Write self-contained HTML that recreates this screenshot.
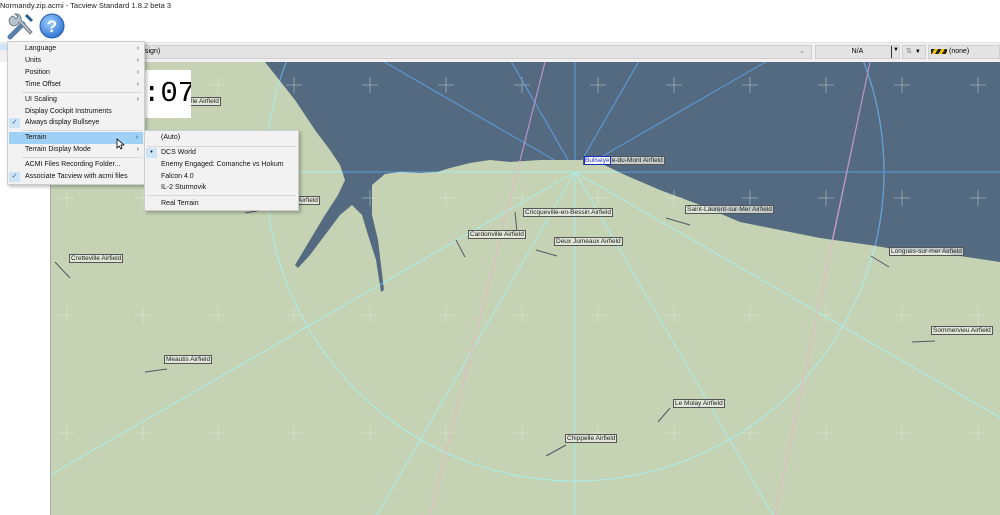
<!DOCTYPE html>
<html style="overflow:hidden"><head><meta charset="utf-8"><style>
*{margin:0;padding:0;box-sizing:border-box}
html,body{width:1000px;height:515px;overflow:hidden}
body{background:#fff;font-family:"Liberation Sans",sans-serif;position:relative}
.abs{position:absolute}
.lbl{position:absolute;font-size:6.5px;line-height:7px;padding:0 1px;border:1px solid #555;background:rgba(235,238,230,.75);color:#222;white-space:nowrap}
.menu{position:absolute;background:#f2f2f2;border:1px solid #ccc;box-shadow:2px 2px 3px rgba(0,0,0,.25);font-size:7px;color:#111}
.it{position:absolute;left:0;right:0;height:12px;line-height:12px}
.sep{position:absolute;left:14px;right:2px;height:1px;background:#d8d8d8}
.arr{position:absolute;right:5px;font-size:7px;color:#444}
</style></head><body>
<div class="abs" style="left:0;top:1px;font-size:7.5px;color:#222">Normandy.zip.acmi - Tacview Standard 1.8.2 beta 3</div>
<svg class="abs" style="left:6px;top:11px" width="30" height="30" viewBox="0 0 30 30">
<path d="M4 26 L17 13" stroke="#5a7fa8" stroke-width="5" stroke-linecap="round"/>
<path d="M7 5 a5 5 0 1 0 6 6 L24 23 L26 21 L15 9 a5 5 0 0 0 -6 -6 l3 3 -2 2z" fill="#b8c4cc" stroke="#6d7a85" stroke-width="1"/>
<path d="M20 4 L26 10" stroke="#2c5f96" stroke-width="3"/>
</svg>
<svg class="abs" style="left:39px;top:13px" width="26" height="26" viewBox="0 0 26 26">
<defs><radialGradient id="g" cx=".4" cy=".35" r=".7"><stop offset="0" stop-color="#9fd0ff"/><stop offset="1" stop-color="#2a6fd0"/></radialGradient></defs>
<circle cx="13" cy="13" r="12" fill="url(#g)" stroke="#2a5ea8"/>
<text x="13" y="19" text-anchor="middle" font-family="Liberation Sans" font-weight="bold" font-size="17" fill="#fff">?</text>
</svg>
<div class="abs" style="left:0;top:42px;width:1000px;height:20px;background:#f0f0f0;border-top:1px solid #e4e4e4"></div>
<div class="abs" style="left:0;top:44px;width:8px;height:6px;background:#cfe3f7"></div>
<div class="abs" style="left:140px;top:45px;width:672px;height:14px;background:#e3e3e3;border:1px solid #cfcfcf;font-size:7px;line-height:12px;padding-left:4px">sign)<span style="position:absolute;right:6px;color:#777">&#8964;</span></div>
<div class="abs" style="left:815px;top:45px;width:85px;height:14px;background:#e3e3e3;border:1px solid #cfcfcf;font-size:7px;line-height:12px;text-align:center">N/A</div>
<div class="abs" style="left:891px;top:46px;width:1px;height:12px;background:#333"></div>
<div class="abs" style="left:893px;top:47px;font-size:6px">&#9660;</div>
<div class="abs" style="left:902px;top:45px;width:24px;height:14px;background:#e3e3e3;border:1px solid #cfcfcf;font-size:7px;line-height:12px;padding-left:3px;color:#777">&#8645;<span style="color:#000;font-size:6px;margin-left:3px">&#9660;</span></div>
<div class="abs" style="left:928px;top:45px;width:72px;height:14px;background:#e3e3e3;border:1px solid #cfcfcf;font-size:7px;line-height:12px;padding-left:20px">(none)</div>
<div class="abs" style="left:931px;top:49px;width:16px;height:5px;background:repeating-linear-gradient(120deg,#222 0 3px,#f2c200 3px 6px)"></div>
<svg class="abs" style="left:0;top:0" width="1000" height="515" viewBox="0 0 1000 515">
<defs>
<clipPath id="map"><rect x="51" y="62" width="949" height="453"/></clipPath>
<clipPath id="sea"><path d="M265,62 L1000,62 L1000,262 L960,256 L940,252 L900,250 L870,245 L820,238 L780,230 L740,222 L700,205 L660,190 L625,175 L600,163 L590,160 L540,160 L510,162 L490,160 L470,163 L450,168 L437,172 L420,173 L400,172 L385,174 L372,185 L372,215 L378,240 L384,290 L381,292 L376,260 L368,235 L362,215 L352,205 L340,215 L325,235 L310,255 L298,268 L295,265 L310,240 L325,215 L338,195 L345,180 L340,165 L330,150 L315,130 L295,100 Z"/></clipPath>
</defs>
<line x1="50.5" y1="62" x2="50.5" y2="515" stroke="#aaa"/>
<g clip-path="url(#map)">
<rect x="51" y="62" width="949" height="453" fill="#c5d3b4"/>
<path d="M265,62 L1000,62 L1000,262 L960,256 L940,252 L900,250 L870,245 L820,238 L780,230 L740,222 L700,205 L660,190 L625,175 L600,163 L590,160 L540,160 L510,162 L490,160 L470,163 L450,168 L437,172 L420,173 L400,172 L385,174 L372,185 L372,215 L378,240 L384,290 L381,292 L376,260 L368,235 L362,215 L352,205 L340,215 L325,235 L310,255 L298,268 L295,265 L310,240 L325,215 L338,195 L345,180 L340,165 L330,150 L315,130 L295,100 Z" fill="#546a80"/>
<g stroke-width="1" fill="none" opacity=".4" stroke="#eef3e4">
<path d="M67,77v16M59,85h16M143,77v16M135,85h16M218,77v16M210,85h16M294,77v16M286,85h16M370,77v16M362,85h16M446,77v16M438,85h16M522,77v16M514,85h16M598,77v16M590,85h16M674,77v16M666,85h16M750,77v16M742,85h16M826,77v16M818,85h16M902,77v16M894,85h16M978,77v16M970,85h16"/>
<path d="M67,190v16M59,198h16M143,190v16M135,198h16M218,190v16M210,198h16M294,190v16M286,198h16M370,190v16M362,198h16M446,190v16M438,198h16M522,190v16M514,198h16M598,190v16M590,198h16M674,190v16M666,198h16M750,190v16M742,198h16M826,190v16M818,198h16M902,190v16M894,198h16M978,190v16M970,198h16"/>
<path d="M67,307v16M59,315h16M143,307v16M135,315h16M218,307v16M210,315h16M294,307v16M286,315h16M370,307v16M362,315h16M446,307v16M438,315h16M522,307v16M514,315h16M598,307v16M590,315h16M674,307v16M666,315h16M750,307v16M742,315h16M826,307v16M818,315h16M902,307v16M894,315h16M978,307v16M970,315h16"/>
<path d="M67,425v16M59,433h16M143,425v16M135,433h16M218,425v16M210,433h16M294,425v16M286,433h16M370,425v16M362,433h16M446,425v16M438,433h16M522,425v16M514,433h16M598,425v16M590,433h16M674,425v16M666,433h16M750,425v16M742,433h16M826,425v16M818,433h16M902,425v16M894,433h16M978,425v16M970,433h16"/>
</g>
<g stroke="#a9eeee" stroke-width="1" fill="none">
<path d="M575,172 L1575,172 M575,172 L1441,672 M575,172 L1075,1038 M575,172 L575,1172 M575,172 L75,1038 M575,172 L-291,672 M575,172 L-425,172"/>
<circle cx="575" cy="172" r="309"/>
</g>
<g stroke="#5b9ee0" stroke-width="1" fill="none" clip-path="url(#sea)">
<path d="M575,172 L1575,172 M575,172 L-425,172 M575,172 L-291,-328 M575,172 L75,-694 M575,172 L575,-828 M575,172 L1075,-694 M575,172 L1441,-328 M575,172 L1441,672 M575,172 L-291,672"/>
<circle cx="575" cy="172" r="309"/>
</g>
<path d="M545,62 L430,515" stroke="#e4b8c8" stroke-width="1" fill="none"/>
<path d="M545,62 L490,280" stroke="#b48cc8" stroke-width="1" fill="none" clip-path="url(#sea)"/>
<path d="M870,62 L775,515" stroke="#e4b8c8" stroke-width="1" fill="none"/>
<path d="M870,62 L830,250" stroke="#b48cc8" stroke-width="1" fill="none" clip-path="url(#sea)"/>
<g stroke="#556" stroke-width="1">
<path d="M55,262 L70,278 M145,372 L167,369 M536,250 L557,256 M456,240 L465,257 M515,212 L517,232 M666,218 L690,225 M871,256 L889,267 M912,342 L935,341 M658,422 L670,408 M546,456 L566,445 M245,213 L262,210"/>
</g>
</g>
</svg>
<div class="lbl" style="left:189px;top:97px">lle Airfield</div>
<div class="lbl" style="left:296px;top:196px">Airfield</div>
<div class="lbl" style="left:69px;top:254px">Cretteville Airfield</div>
<div class="lbl" style="left:164px;top:355px">Meautis Airfield</div>
<div class="lbl" style="left:583px;top:156px"><span style="background:#fff;color:#1a2fc0;outline:1px solid #1a2fc0">Bullseye</span>re-du-Mont Airfield</div>
<div class="lbl" style="left:523px;top:208px">Cricqueville-en-Bessin Airfield</div>
<div class="lbl" style="left:468px;top:230px">Cardonville Airfield</div>
<div class="lbl" style="left:554px;top:237px">Deux Jumeaux Airfield</div>
<div class="lbl" style="left:685px;top:205px">Saint-Laurent-sur-Mer Airfield</div>
<div class="lbl" style="left:889px;top:247px">Longues-sur-mer Airfield</div>
<div class="lbl" style="left:931px;top:326px">Sommervieu Airfield</div>
<div class="lbl" style="left:673px;top:399px">Le Molay Airfield</div>
<div class="lbl" style="left:565px;top:434px">Chippelle Airfield</div>
<div class="abs" style="left:143px;top:70px;width:48px;height:48px;background:#fff;font-family:'Liberation Mono',monospace;font-size:29px;line-height:48px;overflow:hidden">:07</div>
<div class="menu" style="left:7px;top:41px;width:138px;height:144px">
<div class="it" style="top:1px;padding-left:17px">Language<span class="arr">&#8250;</span></div>
<div class="it" style="top:13px;padding-left:17px">Units<span class="arr">&#8250;</span></div>
<div class="it" style="top:25px;padding-left:17px">Position<span class="arr">&#8250;</span></div>
<div class="it" style="top:37px;padding-left:17px">Time Offset<span class="arr">&#8250;</span></div>
<div class="sep" style="top:50px"></div>
<div class="it" style="top:52px;padding-left:17px">UI Scaling<span class="arr">&#8250;</span></div>
<div class="it" style="top:64px;padding-left:17px">Display Cockpit Instruments</div>
<div class="it" style="top:75px;padding-left:17px"><span style="position:absolute;left:1px;top:1px;width:11px;height:10px;background:#cde4f7;color:#2a5fa0;text-align:center;line-height:10px">&#10003;</span>Always display Bullseye</div>
<div class="sep" style="top:88px"></div>
<div class="it" style="top:90px;left:1px;right:1px;background:#9fd0f5;padding-left:16px">Terrain<span class="arr">&#8250;</span></div>
<div class="it" style="top:102px;padding-left:17px">Terrain Display Mode<span class="arr">&#8250;</span></div>
<div class="sep" style="top:115px"></div>
<div class="it" style="top:117px;padding-left:17px">ACMI Files Recording Folder...</div>
<div class="it" style="top:129px;padding-left:17px"><span style="position:absolute;left:1px;top:1px;width:11px;height:10px;background:#cde4f7;color:#2a5fa0;text-align:center;line-height:10px">&#10003;</span>Associate Tacview with acmi files</div>
</div>
<svg class="abs" style="left:116px;top:138px" width="10" height="12" viewBox="0 0 10 12"><path d="M1 1 L1 10 L3 8 L5 11 L6 10 L5 7 L8 7 Z" fill="#fff" stroke="#000" stroke-width=".8"/></svg>
<div class="menu" style="left:144px;top:130px;width:155px;height:81px">
<div class="it" style="top:1px;padding-left:16px">(Auto)</div>
<div class="sep" style="top:15px;left:2px"></div>
<div class="it" style="top:16px;padding-left:16px"><span style="position:absolute;left:1px;top:1px;width:11px;height:10px;background:#cde4f7;text-align:center;line-height:10px">&#8226;</span>DCS World</div>
<div class="it" style="top:28px;padding-left:16px">Enemy Engaged: Comanche vs Hokum</div>
<div class="it" style="top:40px;padding-left:16px">Falcon 4.0</div>
<div class="it" style="top:51px;padding-left:16px">IL-2 Sturmovik</div>
<div class="sep" style="top:64px;left:2px"></div>
<div class="it" style="top:67px;padding-left:16px">Real Terrain</div>
</div>
</body></html>
